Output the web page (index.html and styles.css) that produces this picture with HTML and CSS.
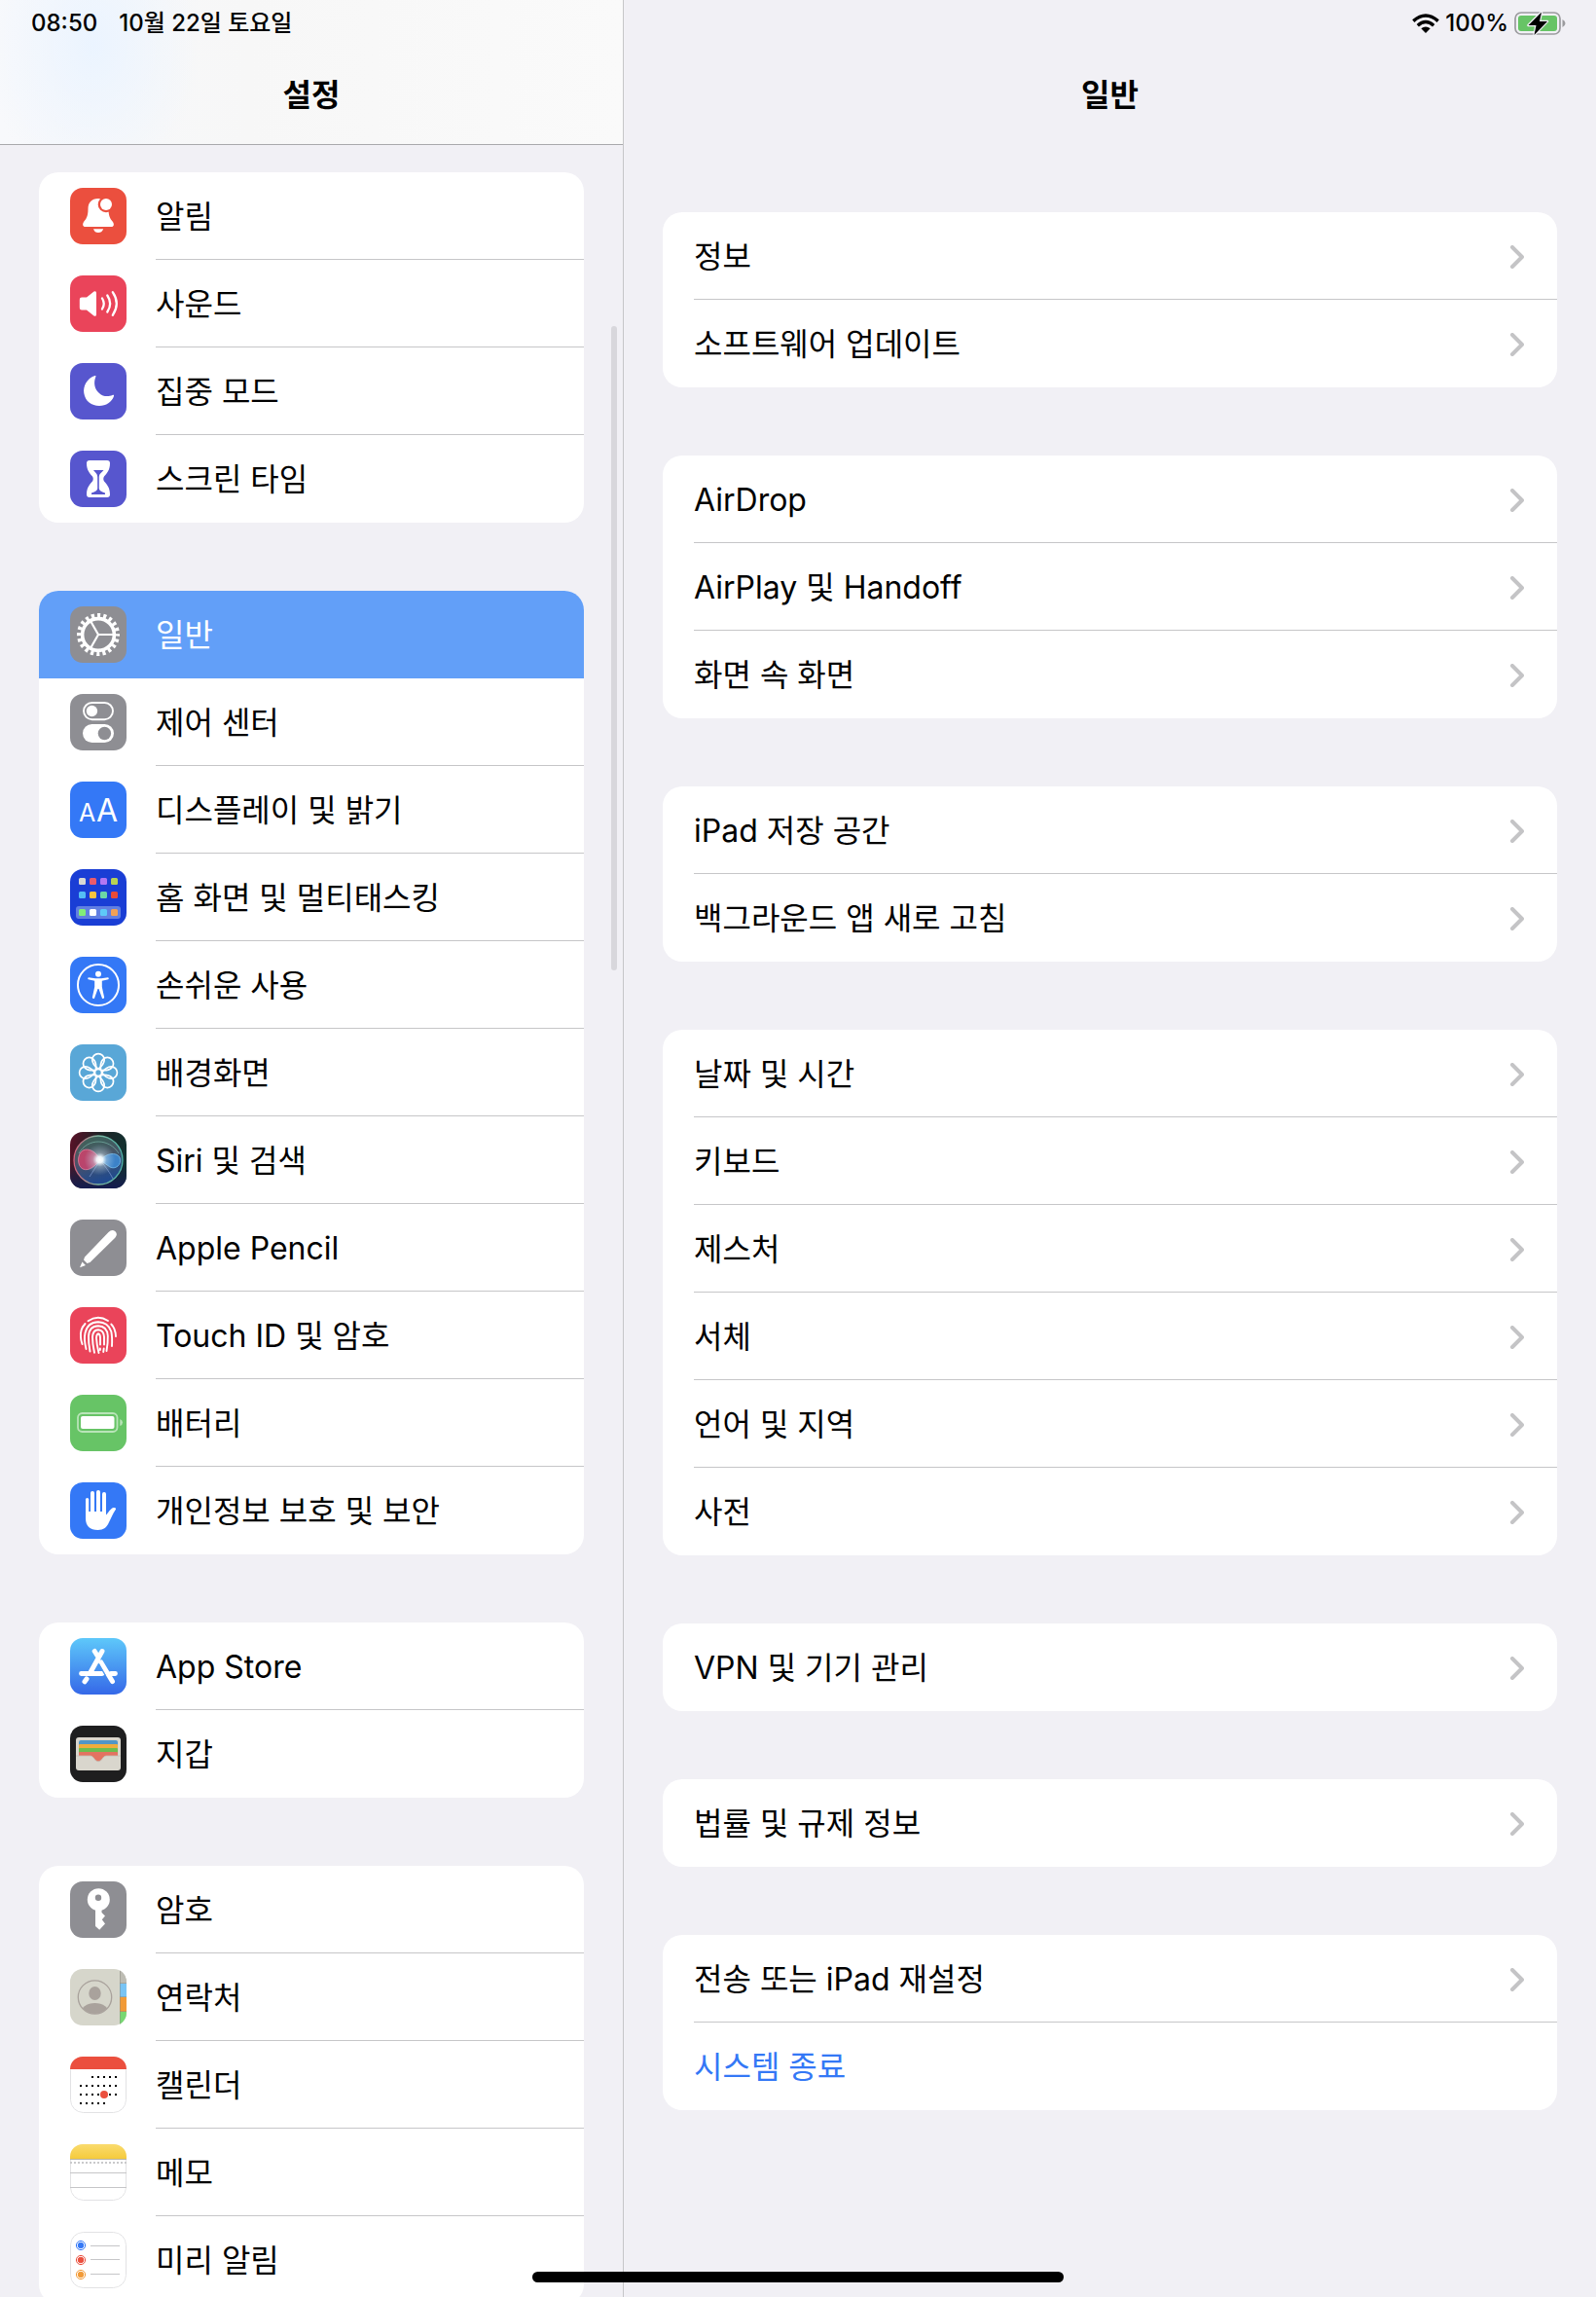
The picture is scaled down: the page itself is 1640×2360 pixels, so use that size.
FILE: index.html
```html
<!DOCTYPE html>
<html lang="ko">
<head>
<meta charset="utf-8">
<meta name="viewport" content="width=device-width, initial-scale=1">
<title>설정</title>
<link rel="stylesheet" href="styles.css">
</head>
<body>
<div class="app">
  <aside class="sidebar">
    <header class="bar bar-blurred">
      <div class="status">
        <time>08:50</time>
        <span>10월 22일 토요일</span>
      </div>
      <h1 class="title">설정</h1>
    </header>
    <nav class="groups groups-nav" aria-label="설정">
      <ul class="card">
        <li><a class="row" href="#notifications">
          <svg class="icon red" viewBox="0 0 58 58" aria-hidden="true"><path fill="#fff" d="M29 11C22 11 18.500 15 18.500 22 18.500 30 16 32.500 14 35 12.500 37.500 13 40 15.500 40H42.500C45 40 45.500 37.500 44 35 42 32.500 39.500 30 39.500 22 39.500 15 36 11 29 11ZM24 42.200H34.200C33 45 31.500 46 29 46S25 45 24 42.200Z"/><circle cx="37" cy="17" r="8.300" fill="#eb4f3e"/><circle cx="37" cy="17" r="6" fill="#fff"/></svg>
          <span class="label">알림</span></a></li>
        <li><a class="row" href="#sounds">
          <svg class="icon pink" viewBox="0 0 58 58" aria-hidden="true"><path fill="#fff" d="M12 22.500H17L24.500 16.500Q27 15.300 27 18V40Q27 42.700 24.500 41.500L17 35.500H12Q9.800 35.500 9.800 33.300V24.700Q9.800 22.500 12 22.500Z"/><path fill="none" stroke="#fff" stroke-width="2.300" stroke-linecap="round" d="M33 23.500Q36.500 29 33 34.500M38.300 20.500Q44 29 38.300 37.500M43.800 17.200Q51.800 29 43.800 40.800"/></svg>
          <span class="label">사운드</span></a></li>
        <li><a class="row" href="#focus">
          <svg class="icon indigo" viewBox="0 0 58 58" aria-hidden="true"><path fill="#fff" d="M25.500 13C17 16 13.200 24 14.300 31 15.500 39 22 44 30 44 37 44 43 40 45 34 45.300 33 44.500 32.500 43.500 33 40 34.500 34 35 30 31 25 27 24 20 26.300 14.300 26.700 13.200 26.500 12.600 25.500 13Z"/></svg>
          <span class="label">집중 모드</span></a></li>
        <li><a class="row" href="#screen-time">
          <svg class="icon indigo" viewBox="0 0 58 58" aria-hidden="true"><path fill="#fff" d="M20 10H38Q41 10 41 13C41 20 38 23 35 26.500Q33.500 29 35 31.500C38 35 41 38 41 45Q41 48 38 48H20Q17 48 17 45C17 38 20 35 23 31.500Q24.500 29 23 26.500C20 23 17 20 17 13Q17 10 20 10Z"/><path fill="#5756ce" d="M24 20H34.500C33 22.500 30 23 29.800 27V39Q30 41.500 36 43.500V45H22V43.500Q28 41.500 28.200 39V27C28 23 25.500 22.500 24 20Z"/></svg>
          <span class="label">스크린 타임</span></a></li>
      </ul>

      <ul class="card">
        <li><a class="row selected" href="#general" aria-current="page">
          <svg class="icon gray" viewBox="0 0 58 58" aria-hidden="true"><g fill="none" stroke="#fff"><circle cx="29" cy="29" r="19.500" stroke-width="5" stroke-dasharray="3.100 3.026" stroke-dashoffset="1.550"/><circle cx="29" cy="29" r="16.400" stroke-width="3.600"/><path stroke-width="2.200" d="M29 29H45M29 29 21 15M29 29 21 43"/></g></svg>
          <span class="label">일반</span></a></li>
        <li><a class="row" href="#control-center">
          <svg class="icon gray" viewBox="0 0 58 58" aria-hidden="true"><rect x="14" y="9" width="30" height="17.200" rx="8.600" fill="none" stroke="#fff" stroke-width="1.900"/><circle cx="22.400" cy="17.500" r="5.700" fill="#fff"/><rect x="13" y="31" width="32" height="19" rx="9.500" fill="#fff"/><circle cx="35.400" cy="40.500" r="6.700" fill="#8e8e93"/></svg>
          <span class="label">제어 센터</span></a></li>
        <li><a class="row" href="#display">
          <svg class="icon blue" viewBox="0 0 58 58" aria-hidden="true"><text class="glyph" x="9" y="41" font-size="25">A</text><text class="glyph" x="27" y="41" font-size="32">A</text></svg>
          <span class="label">디스플레이 및 밝기</span></a></li>
        <li><a class="row" href="#home-screen">
          <svg class="icon navy" viewBox="0 0 58 58" aria-hidden="true"><rect x="6" y="38" width="46" height="13" rx="3" fill="#617fe2"/><g><rect x="9" y="9" width="7" height="7" rx="1.500" fill="#d9d9d3"/><rect x="20" y="9" width="7" height="7" rx="1.500" fill="#ea5b6b"/><rect x="31" y="9" width="7" height="7" rx="1.500" fill="#b277f2"/><rect x="42" y="9" width="7" height="7" rx="1.500" fill="#b8d254"/><rect x="9" y="23" width="7" height="7" rx="1.500" fill="#54bef5"/><rect x="20" y="23" width="7" height="7" rx="1.500" fill="#f8c440"/><rect x="31" y="23" width="7" height="7" rx="1.500" fill="#6cd6a6"/><rect x="42" y="23" width="7" height="7" rx="1.500" fill="#e94b38"/><rect x="9" y="41" width="7" height="7" rx="1.500" fill="#82ee79"/><rect x="20" y="41" width="7" height="7" rx="1.500" fill="#fff"/><rect x="31" y="41" width="7" height="7" rx="1.500" fill="#5ec9f8"/><rect x="42" y="41" width="7" height="7" rx="1.500" fill="#f2a155"/></g></svg>
          <span class="label">홈 화면 및 멀티태스킹</span></a></li>
        <li><a class="row" href="#accessibility">
          <svg class="icon blue" viewBox="0 0 58 58" aria-hidden="true"><circle cx="29" cy="29" r="21" fill="none" stroke="#fff" stroke-width="2"/><circle cx="29" cy="17.700" r="3" fill="#fff"/><path fill="#fff" d="M19 21.200 26 22.200H32L39 21.200Q40.400 22.300 39.300 23.200L32.800 24.700V31L35.200 42Q34.300 43.800 33 42.700L29.500 33H28.500L25 42.700Q23.700 43.800 22.800 42L25.200 31V24.700L18.700 23.200Q17.600 22.300 19 21.200Z"/></svg>
          <span class="label">손쉬운 사용</span></a></li>
        <li><a class="row" href="#wallpaper">
          <svg class="icon sky" viewBox="0 0 58 58" aria-hidden="true"><defs><path id="petal" d="M29 25.400C26 23 22.800 20 22.800 15.800A6.200 6.200 0 1 1 35.200 15.800C35.200 20 32 23 29 25.400Z"/></defs><g fill="none" stroke="#fff" stroke-width="1.700"><use href="#petal"/><use href="#petal" transform="rotate(45 29 29)"/><use href="#petal" transform="rotate(90 29 29)"/><use href="#petal" transform="rotate(135 29 29)"/><use href="#petal" transform="rotate(180 29 29)"/><use href="#petal" transform="rotate(225 29 29)"/><use href="#petal" transform="rotate(270 29 29)"/><use href="#petal" transform="rotate(315 29 29)"/><circle cx="29" cy="29" r="3.600"/></g></svg>
          <span class="label">배경화면</span></a></li>
        <li><a class="row" href="#siri">
          <svg class="icon" viewBox="0 0 58 58" aria-hidden="true"><defs><linearGradient id="siri-bg" x1="0" y1="0" x2="1" y2="0.200"><stop offset="0" stop-color="#5c1027"/><stop offset="0.500" stop-color="#1f2326"/><stop offset="1" stop-color="#12302f"/></linearGradient><linearGradient id="siri-base" x1="0" y1="0" x2="0" y2="1"><stop offset="0.550" stop-color="#15204a" stop-opacity="0"/><stop offset="1" stop-color="#151c50"/></linearGradient><linearGradient id="siri-orb" x1="0" y1="0" x2="0.300" y2="1"><stop offset="0" stop-color="#3c7a64"/><stop offset="0.500" stop-color="#536073"/><stop offset="1" stop-color="#2453a0"/></linearGradient><linearGradient id="siri-rim" x1="0" y1="0" x2="1" y2="0"><stop offset="0" stop-color="#d4607c"/><stop offset="0.500" stop-color="#7cb7a2"/><stop offset="1" stop-color="#4fb3a8"/></linearGradient><radialGradient id="siri-glow"><stop offset="0" stop-color="#fff"/><stop offset="0.200" stop-color="#f4fcff" stop-opacity="0.950"/><stop offset="0.450" stop-color="#d5ebf5" stop-opacity="0.400"/><stop offset="1" stop-color="#b7d8f0" stop-opacity="0"/></radialGradient></defs><rect width="58" height="58" fill="url(#siri-bg)"/><rect width="58" height="58" fill="url(#siri-base)"/><circle cx="29" cy="29" r="25" fill="url(#siri-orb)" fill-opacity="0.800" stroke="url(#siri-rim)" stroke-width="1.300"/><path fill="#e0406d" fill-opacity="0.750" stroke="#f08aa8" stroke-opacity="0.700" d="M31 29C27 20 19 16 13 19 7 23 7 35 13 38 20 41 26 34 31 29Z"/><path fill="#3f8fdc" fill-opacity="0.800" stroke="#7cc4f2" stroke-opacity="0.700" d="M31 29C37 22 47 20 51 26 54 34 46 39 41 36Z"/><path fill="none" stroke="#8fd6c4" stroke-opacity="0.500" d="M9 22C18 6 40 6 50 22"/><path fill="none" stroke="#8fa8e0" stroke-opacity="0.600" d="M20 46C24 40 27 35 31 29 38 38 41 42 44 48"/><circle cx="30.500" cy="28.500" r="16" fill="url(#siri-glow)"/></svg>
          <span class="label">Siri 및 검색</span></a></li>
        <li><a class="row" href="#pencil">
          <svg class="icon gray" viewBox="0 0 58 58" aria-hidden="true"><path fill="#fff" d="M14 41.500 15 38.500 39.500 13Q43 9.300 46.500 12.200 49.500 15.500 46 19L20.500 44 17.500 45ZM12.500 43.500 16 47 10 49.200Z"/></svg>
          <span class="label">Apple Pencil</span></a></li>
        <li><a class="row" href="#touch-id">
          <svg class="icon pink" viewBox="0 0 58 58" aria-hidden="true"><g fill="none" stroke="#fff" stroke-width="1.900" stroke-linecap="round"><path d="M18.500 14.300Q28.500 7.500 39 14M42.300 17.500Q46.700 22 47 30"/><path d="M15.500 17Q10 23 11 31 11 34 12.500 38"/><path d="M16.500 43Q14 33 15.500 26.500 18 15.500 29 15.300 39 15.500 42.300 25 43.500 31 43 40"/><path d="M20.500 45.500Q18.800 37 19 30 19.500 19.500 29 19.300 38 19.500 38.800 29.500 39 37 37.500 45"/><path d="M25 46.800Q23 38 23 30.500 23.500 23.300 29 23.200 34.500 23.500 35 30.500V38.500M34.700 42.500 34.200 46"/><path d="M29.500 47Q27.300 38 27 31.500 27.300 27.500 29 27.300 30.900 27.500 31 31.500L31 38.500M30.900 42.500V44"/></g></svg>
          <span class="label">Touch ID 및 암호</span></a></li>
        <li><a class="row" href="#battery">
          <svg class="icon green" viewBox="0 0 58 58" aria-hidden="true"><rect x="8" y="19" width="40.500" height="19" rx="4.500" fill="none" stroke="#b9e4b8" stroke-width="1.800"/><rect x="11" y="22" width="34.500" height="13" rx="2" fill="#fff"/><path fill="#b9e4b8" d="M51.300 25Q54 26 54 28.500T51.300 32Z"/></svg>
          <span class="label">배터리</span></a></li>
        <li><a class="row" href="#privacy">
          <svg class="icon blue" viewBox="0 0 58 58" aria-hidden="true"><path fill="none" stroke="#fff" stroke-width="4" stroke-linecap="round" d="M23 11V32M29 10V32M35 12V32"/><path fill="none" stroke="#fff" stroke-width="3.200" stroke-linecap="round" d="M17.600 17.500V32"/><path fill="#fff" d="M16 30H37V33.500C39 32 41 27 44.500 26 47 25.700 47.800 27 46.500 28.500 44 32 42.500 36 40 41 38 46 34.500 49 28.500 49 20.500 49 16 45 16 37Z"/></svg>
          <span class="label">개인정보 보호 및 보안</span></a></li>
      </ul>

      <ul class="card">
        <li><a class="row" href="#app-store">
          <svg class="icon store" viewBox="0 0 58 58" aria-hidden="true"><g stroke="#fff" stroke-width="5" stroke-linecap="round"><path d="M33 13.500 20.500 36M25.200 13.500 28 18M31.800 25 43.500 44.500M17 42 15 44.800"/><path stroke-width="4.800" d="M11.500 36.500H33M42 36.500H46.500"/></g><path stroke="#4a96f1" stroke-width="1.300" d="M29.500 26.500 36.500 38.800"/></svg>
          <span class="label">App Store</span></a></li>
        <li><a class="row" href="#wallet">
          <svg class="icon black" viewBox="0 0 58 58" aria-hidden="true"><rect x="6" y="12" width="46" height="34" rx="3" fill="#d9d6cd"/><path fill="#5196c8" d="M9 31V17Q9 15 11 15H47Q49 15 49 17V31Z"/><path fill="#f0ad3c" d="M9 31V20Q9 19 10 19H48Q49 19 49 20V31Z"/><path fill="#6ebd50" d="M9 31V24Q9 23 10 23H48Q49 23 49 24V31Z"/><path fill="#e37361" d="M9 31V28Q9 27 10 27H48Q49 27 49 28V31H37C33.500 31 33 36.700 29 36.700S24.500 31 21 31Z"/><path fill="none" stroke="#c4c0b8" stroke-width="0.800" d="M6 31H21C24.500 31 25 36.900 29 36.900S33.500 31 37 31H52"/></svg>
          <span class="label">지갑</span></a></li>
      </ul>

      <ul class="card">
        <li><a class="row" href="#passwords">
          <svg class="icon gray" viewBox="0 0 58 58" aria-hidden="true"><circle cx="29.300" cy="18.700" r="11.500" fill="#fff"/><path fill="#fff" d="M26 28H32.500V32L36 35.500 32.800 39.300 36 43.500 30.200 49.800 26 46Z"/><circle cx="29" cy="16.700" r="3.200" fill="#8e8e93"/></svg>
          <span class="label">암호</span></a></li>
        <li><a class="row" href="#contacts">
          <svg class="icon beige" viewBox="0 0 58 58" aria-hidden="true"><path fill="#bdbcb3" d="M51 0H58V15H51Z"/><path fill="#79c4f4" d="M51 15H58V29H51Z"/><path fill="#f19a37" d="M51 29H58V44H51Z"/><path fill="#77d872" d="M51 44H58V58H51Z"/><path stroke="#8c8a80" stroke-opacity="0.500" d="M51.500 0V58M51 14.500H58M51 28.500H58M51 43.500H58"/><clipPath id="contact"><circle cx="25.500" cy="29" r="17"/></clipPath><circle cx="25.500" cy="29" r="17.200" fill="none" stroke="#a9a29c" stroke-width="1.300"/><ellipse cx="25.500" cy="25" rx="6.200" ry="7" fill="#a9a29c"/><ellipse cx="25.500" cy="46" rx="15" ry="11" fill="#a9a29c" clip-path="url(#contact)"/></svg>
          <span class="label">연락처</span></a></li>
        <li><a class="row" href="#calendar">
          <svg class="icon white" viewBox="0 0 58 58" aria-hidden="true"><rect x="0.500" y="0.500" width="57" height="57" rx="13" fill="#fff" stroke="#e2e2e4"/><path fill="#eb4f3e" d="M0 0H58V13H0Z"/><g stroke="#000" stroke-width="2" stroke-dasharray="2 4"><path d="M22 21H48M10 30H48M10 39H48M10 48H36"/></g><circle cx="35" cy="39" r="4" fill="#eb4f3e"/></svg>
          <span class="label">캘린더</span></a></li>
        <li><a class="row" href="#notes">
          <svg class="icon white" viewBox="0 0 58 58" aria-hidden="true"><defs><linearGradient id="note-top" x1="0" y1="0" x2="0" y2="1"><stop offset="0" stop-color="#fadb6e"/><stop offset="1" stop-color="#f5cb3c"/></linearGradient></defs><rect x="0.500" y="0.500" width="57" height="57" rx="13" fill="#fff" stroke="#e2e2e4"/><path fill="url(#note-top)" d="M0 0H58V15H0Z"/><path stroke="#b9b4a4" d="M0 15.500H58"/><path stroke="#c9c9cb" stroke-width="2" stroke-dasharray="2 2" d="M0 19H58"/><path stroke="#c6c6c8" d="M0 29.500H58M0 44.500H58"/></svg>
          <span class="label">메모</span></a></li>
        <li><a class="row" href="#reminders">
          <svg class="icon white" viewBox="0 0 58 58" aria-hidden="true"><rect x="0.500" y="0.500" width="57" height="57" rx="13" fill="#fff" stroke="#e2e2e4"/><g fill="#3478f6" stroke="#3478f6"><circle cx="11" cy="14" r="2.800"/><circle cx="11" cy="14" r="4.600" fill="none"/></g><g fill="#eb4f3e" stroke="#eb4f3e"><circle cx="11" cy="29" r="2.800"/><circle cx="11" cy="29" r="4.600" fill="none"/></g><g fill="#f19a37" stroke="#f19a37"><circle cx="11" cy="44" r="2.800"/><circle cx="11" cy="44" r="4.600" fill="none"/></g><path stroke="#c6c6c8" d="M21 14.500H51M21 28.500H51M21 43.500H51"/></svg>
          <span class="label">미리 알림</span></a></li>
      </ul>
    </nav>
    <div class="scroll-thumb"></div>
  </aside>

  <main class="detail">
    <header class="bar">
      <div class="status status-end">
        <svg class="wifi" viewBox="0 0 28 20" role="img" aria-label="Wi-Fi"><g fill="none" stroke="#000" stroke-width="3.400"><path d="M1.300 7.600Q14-3.600 26.700 7.600"/><path d="M5.800 12.200Q14 4.900 22.200 12.200"/></g><path d="M14 20 9.300 15.300Q14 11.600 18.700 15.300Z"/></svg>
        <span>100%</span>
        <svg class="battery" viewBox="0 0 54 26" role="img" aria-label="배터리 충전 중"><rect x="1" y="2" width="46" height="22" rx="6" fill="none" stroke="#9b9b9e" stroke-width="1.700"/><rect x="4" y="5" width="40" height="16" rx="3" fill="#67c466"/><path fill="#9b9b9e" d="M49.500 9Q52.500 10.500 52.500 13T49.500 17Z"/><path d="M28 1.500 14.500 15H22.500L20.500 25 34 11H26Z" stroke="#f1f0f5" stroke-width="2.500" stroke-linejoin="round" paint-order="stroke"/></svg>
      </div>
      <h2 class="title">일반</h2>
    </header>
    <div class="groups groups-detail">
      <ul class="card">
        <li><a class="row" href="#about"><span class="label">정보<svg class="chevron" viewBox="0 0 14 24" aria-hidden="true"><path d="M2 2 12 12 2 22"/></svg></span></a></li>
        <li><a class="row" href="#update"><span class="label">소프트웨어 업데이트<svg class="chevron" viewBox="0 0 14 24" aria-hidden="true"><path d="M2 2 12 12 2 22"/></svg></span></a></li>
      </ul>
      <ul class="card">
        <li><a class="row" href="#airdrop"><span class="label">AirDrop<svg class="chevron" viewBox="0 0 14 24" aria-hidden="true"><path d="M2 2 12 12 2 22"/></svg></span></a></li>
        <li><a class="row" href="#airplay"><span class="label">AirPlay 및 Handoff<svg class="chevron" viewBox="0 0 14 24" aria-hidden="true"><path d="M2 2 12 12 2 22"/></svg></span></a></li>
        <li><a class="row" href="#pip"><span class="label">화면 속 화면<svg class="chevron" viewBox="0 0 14 24" aria-hidden="true"><path d="M2 2 12 12 2 22"/></svg></span></a></li>
      </ul>
      <ul class="card">
        <li><a class="row" href="#storage"><span class="label">iPad 저장 공간<svg class="chevron" viewBox="0 0 14 24" aria-hidden="true"><path d="M2 2 12 12 2 22"/></svg></span></a></li>
        <li><a class="row" href="#refresh"><span class="label">백그라운드 앱 새로 고침<svg class="chevron" viewBox="0 0 14 24" aria-hidden="true"><path d="M2 2 12 12 2 22"/></svg></span></a></li>
      </ul>
      <ul class="card">
        <li><a class="row" href="#date"><span class="label">날짜 및 시간<svg class="chevron" viewBox="0 0 14 24" aria-hidden="true"><path d="M2 2 12 12 2 22"/></svg></span></a></li>
        <li><a class="row" href="#keyboard"><span class="label">키보드<svg class="chevron" viewBox="0 0 14 24" aria-hidden="true"><path d="M2 2 12 12 2 22"/></svg></span></a></li>
        <li><a class="row" href="#gestures"><span class="label">제스처<svg class="chevron" viewBox="0 0 14 24" aria-hidden="true"><path d="M2 2 12 12 2 22"/></svg></span></a></li>
        <li><a class="row" href="#fonts"><span class="label">서체<svg class="chevron" viewBox="0 0 14 24" aria-hidden="true"><path d="M2 2 12 12 2 22"/></svg></span></a></li>
        <li><a class="row" href="#language"><span class="label">언어 및 지역<svg class="chevron" viewBox="0 0 14 24" aria-hidden="true"><path d="M2 2 12 12 2 22"/></svg></span></a></li>
        <li><a class="row" href="#dictionary"><span class="label">사전<svg class="chevron" viewBox="0 0 14 24" aria-hidden="true"><path d="M2 2 12 12 2 22"/></svg></span></a></li>
      </ul>
      <ul class="card">
        <li><a class="row" href="#vpn"><span class="label">VPN 및 기기 관리<svg class="chevron" viewBox="0 0 14 24" aria-hidden="true"><path d="M2 2 12 12 2 22"/></svg></span></a></li>
      </ul>
      <ul class="card">
        <li><a class="row" href="#legal"><span class="label">법률 및 규제 정보<svg class="chevron" viewBox="0 0 14 24" aria-hidden="true"><path d="M2 2 12 12 2 22"/></svg></span></a></li>
      </ul>
      <ul class="card">
        <li><a class="row" href="#reset"><span class="label">전송 또는 iPad 재설정<svg class="chevron" viewBox="0 0 14 24" aria-hidden="true"><path d="M2 2 12 12 2 22"/></svg></span></a></li>
        <li><button class="row action" type="button"><span class="label">시스템 종료</span></button></li>
      </ul>
    </div>
  </main>
  <div class="home-indicator"></div>
</div>
</body>
</html>
```
FILE: styles.css
```css
* {
  box-sizing: border-box;
}

body {
  margin: 0;
  background: #f1f0f5;
  color: #000;
  font-family: Inter, "Noto Sans CJK KR", sans-serif;
  font-size: 32px;
  line-height: 48px;
}

.app {
  position: relative;
  display: grid;
  grid-template-columns: minmax(320px, 641px) minmax(0, 1fr);
  height: 100vh;
  overflow: hidden;
}

.sidebar,
.detail {
  position: relative;
  display: flex;
  flex-direction: column;
  min-width: 0;
  min-height: 0;
}

.sidebar {
  border-right: 1px solid #c6c6c8;
}

/* Top bars */
.bar {
  display: grid;
  grid-template-rows: 48px 100px;
  flex: none;
  border-bottom: 1px solid transparent;
}

.bar-blurred {
  background:
    radial-gradient(ellipse 110px 150px at 96px 46px, #ebf4ff, transparent),
    linear-gradient(90deg, #f8f9fc, #f7f7f7 40%, #fafafa);
  border-bottom-color: #a9a9ac;
}

.status {
  display: flex;
  align-items: center;
  gap: 22px;
  padding: 0 32px;
  font-size: 24px;
  font-weight: 500;
  line-height: 32px;
}

.status-end {
  justify-content: flex-end;
  gap: 6px;
  padding: 0 30px;
}

.wifi {
  width: 28px;
  height: 20px;
}

.battery {
  width: 54px;
  height: 26px;
}

.title {
  display: grid;
  place-items: center;
  margin: 0;
  font-size: 32px;
  font-weight: 600;
}

/* Grouped lists */
.groups {
  display: flex;
  flex-direction: column;
  flex: 1;
  gap: 70px;
  min-height: 0;
  overflow-y: auto;
  scrollbar-width: none;
}

.groups-nav {
  padding: 28px 40px;
}

.groups-detail {
  padding: 69px 40px;
}

.card {
  flex: none;
  margin: 0;
  padding: 0;
  overflow: hidden;
  list-style: none;
  background: #fff;
  border-radius: 20px;
}

.row {
  display: flex;
  align-items: center;
  gap: 30px;
  width: 100%;
  height: 90px;
  padding: 0 0 0 32px;
  color: inherit;
  font: inherit;
  text-align: left;
  text-decoration: none;
  background: none;
  border: 0;
}

.label {
  display: flex;
  flex: 1;
  align-items: center;
  justify-content: space-between;
  align-self: stretch;
  min-width: 0;
  padding: 2px 34px 0 0;
  white-space: nowrap;
  border-bottom: 1px solid #c6c6c8;
}

li:last-child .label,
.selected .label {
  border-bottom-color: transparent;
}

.selected {
  color: #fff;
  background: #629ff8;
}

.action {
  color: #3478f6;
  cursor: pointer;
}

.chevron {
  flex: none;
  width: 14px;
  height: 24px;
  fill: none;
  stroke: #c4c4c6;
  stroke-width: 4;
  stroke-linecap: round;
  stroke-linejoin: round;
}

/* Icon tiles */
.icon {
  flex: none;
  width: 58px;
  height: 58px;
  border-radius: 13px;
}

.glyph {
  fill: #fff;
  font-family: Inter, sans-serif;
  font-weight: 400;
}

.red { background: #eb4f3e; }
.pink { background: #ea445a; }
.indigo { background: #5756ce; }
.gray { background: #8e8e93; }
.blue { background: #3478f6; }
.navy { background: #1a3ed5; }
.sky { background: #59a7d7; }
.green { background: #67c466; }
.black { background: #1e1e1f; }
.beige { background: #d6d6cb; }
.white { background: #fff; }
.store { background: linear-gradient(#5ec8fa, #3568e8); }

/* Overlays */
.scroll-thumb {
  position: absolute;
  top: 335px;
  right: 6px;
  width: 6px;
  height: 662px;
  background: #d8d7dc;
  border-radius: 3px;
}

.home-indicator {
  position: absolute;
  bottom: 15px;
  left: 50%;
  width: 546px;
  height: 11px;
  background: #000;
  border-radius: 6px;
  transform: translateX(-50%);
}
```
